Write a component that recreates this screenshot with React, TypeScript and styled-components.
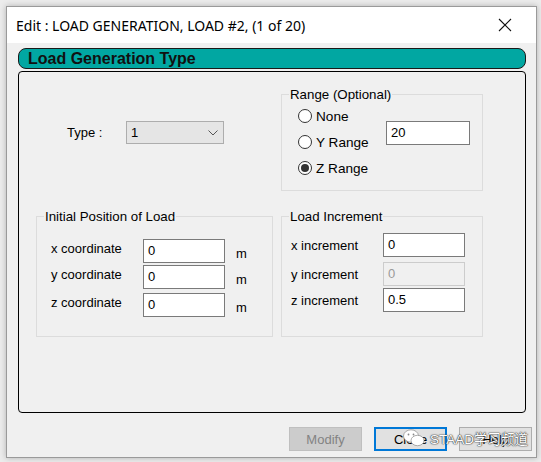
import React from 'react';
import styled, { createGlobalStyle } from 'styled-components';

const GlobalStyle = createGlobalStyle`
  html, body {
    margin: 0;
    padding: 0;
    background: #ececec;
  }
  * { box-sizing: border-box; }
`;

const Page = styled.div`
  width: 541px;
  height: 462px;
  padding: 6px 4px 4px 6px;
  position: relative;
`;

const Window = styled.div`
  width: 531px;
  height: 452px;
  border: 1px solid #9a9a9a;
  background: #f0f0f0;
  box-shadow: 0 0 6px rgba(0, 0, 0, 0.25);
  display: flex;
  flex-direction: column;
`;

const TitleBar = styled.div`
  height: 36px;
  background: #fff;
  display: flex;
  align-items: center;
  justify-content: space-between;
  padding: 0 12px 0 9px;
  font-family: 'Noto Sans', 'Open Sans', sans-serif;
  font-size: 14px;
  color: #000;
`;

const CloseX = styled.svg`
  width: 14px;
  height: 14px;
  margin-right: 12px;
`;

const Body = styled.div`
  flex: 1;
  padding: 5px 10px 0 11px;
  display: flex;
  flex-direction: column;
  font-family: 'Liberation Sans', Arial, sans-serif;
  font-size: 13px;
  color: #000;
`;

const Header = styled.div`
  height: 21px;
  width: 508px;
  background: #01a7a2;
  border: 1px solid #1a1a1a;
  border-radius: 8px;
  padding-left: 9px;
  font-size: 16px;
  font-weight: bold;
  line-height: 19px;
  color: #111;
`;

const Frame = styled.div`
  margin-top: 2px;
  width: 508px;
  height: 342px;
  border: 1px solid #000;
  border-radius: 4px;
  padding: 22px 42px 0 17px;
  display: grid;
  grid-template-columns: 237px 202px;
  grid-template-rows: 97px 121px;
  column-gap: 8px;
  row-gap: 25px;
`;

const TypeRow = styled.div`
  display: flex;
  align-items: center;
  padding: 27px 0 0 31px;
  height: 50px;
`;

const TypeLabel = styled.span`
  width: 59px;
`;

const Select = styled.div`
  width: 98px;
  height: 23px;
  background: #e5e5e5;
  border: 1px solid #adadad;
  display: flex;
  align-items: center;
  justify-content: space-between;
  padding: 0 5px 0 4px;
`;

const Group = styled.div`
  border: 1px solid #dcdcdc;
  display: flex;
  flex-direction: column;
`;

const Legend = styled.div<{ $left: number }>`
  margin: -8px 0 0 ${(p) => p.$left}px;
  align-self: flex-start;
  background: #f0f0f0;
  padding: 0 1px;
  line-height: 15px;
  font-size: 13.3px;
`;

const RangeBody = styled.div`
  display: grid;
  grid-template-columns: 88px 84px;
  padding: 1px 0 0 16px;
  font-size: 13.6px;
`;

const RadioList = styled.div`
  display: flex;
  flex-direction: column;
`;

const RadioRow = styled.label`
  height: 26px;
  display: flex;
  align-items: center;
  gap: 4px;
`;

const RadioCircle = styled.span<{ $checked?: boolean }>`
  width: 14px;
  height: 14px;
  border-radius: 50%;
  border: 1px solid #333;
  background: #fff;
  display: flex;
  align-items: center;
  justify-content: center;
  &::after {
    content: '';
    width: 8px;
    height: 8px;
    border-radius: 50%;
    background: #333;
    display: ${(p) => (p.$checked ? 'block' : 'none')};
  }
`;

const TextBox = styled.div<{ $w?: number; $disabled?: boolean }>`
  width: ${(p) => p.$w ?? 82}px;
  height: 24px;
  border: 1px solid ${(p) => (p.$disabled ? '#cccccc' : '#7a7a7a')};
  background: ${(p) => (p.$disabled ? '#f0f0f0' : '#fff')};
  color: ${(p) => (p.$disabled ? '#9a9a9a' : '#000')};
  padding: 2px 0 0 4px;
  line-height: 17px;
  font-size: 13px;
`;

const RangeInput = styled(TextBox)`
  margin-top: 18px;
`;

const Rows = styled.div<{ $pt: number }>`
  display: flex;
  flex-direction: column;
  padding-top: ${(p) => p.$pt}px;
`;

const FieldRow = styled.div<{ $pl: number; $mt?: number }>`
  display: flex;
  align-items: center;
  padding-left: ${(p) => p.$pl}px;
  margin-top: ${(p) => p.$mt ?? 0}px;
`;

const FieldLabel = styled.span<{ $lift?: number }>`
  width: 92px;
  position: relative;
  top: ${(p) => -(p.$lift ?? 0)}px;
`;

const Unit = styled.span`
  margin-left: 11px;
  position: relative;
  top: 2px;
`;

const ButtonBar = styled.div`
  display: flex;
  justify-content: flex-end;
  gap: 12px;
  margin-top: 14px;
  margin-right: -6px;
`;

const Button = styled.div<{ $variant?: 'disabled' | 'default' }>`
  width: 73px;
  height: 24px;
  display: flex;
  align-items: center;
  justify-content: center;
  font-family: 'Liberation Sans', Arial, sans-serif;
  font-size: 13px;
  background: ${(p) => (p.$variant === 'disabled' ? '#cccccc' : '#e1e1e1')};
  color: ${(p) => (p.$variant === 'disabled' ? '#838383' : '#000')};
  border: ${(p) =>
    p.$variant === 'default' ? '2px solid #0078d7' : p.$variant === 'disabled' ? '1px solid #bfbfbf' : '1px solid #adadad'};
`;

const Watermark = styled.div`
  position: absolute;
  left: 403px;
  top: 428px;
  display: flex;
  align-items: center;
  gap: 5px;
  font-family: 'Liberation Sans', 'Noto Sans CJK SC', sans-serif;
  font-size: 13.5px;
  color: #fff;
  text-shadow: 0 0 1px #333, 0 0 1px #333, 0 0 2px #666;
`;

const App = () => {
  return (
    <Page>
      <GlobalStyle />
      <Window>
        <TitleBar>
          <span>Edit : LOAD GENERATION, LOAD #2, (1 of 20)</span>
          <CloseX viewBox="0 0 14 14">
            <path d="M1 1 L13 13 M13 1 L1 13" stroke="#111" strokeWidth="1.1" />
          </CloseX>
        </TitleBar>
        <Body>
          <Header>Load Generation Type</Header>
          <Frame>
            <TypeRow>
              <TypeLabel>Type :</TypeLabel>
              <Select>
                <span>1</span>
                <svg width="10" height="6" viewBox="0 0 10 6">
                  <path d="M0.5 0.5 L5 5 L9.5 0.5" fill="none" stroke="#555" strokeWidth="1" />
                </svg>
              </Select>
            </TypeRow>
            <Group>
              <Legend $left={7}>Range (Optional)</Legend>
              <RangeBody>
                <RadioList>
                  <RadioRow><RadioCircle />None</RadioRow>
                  <RadioRow><RadioCircle />Y Range</RadioRow>
                  <RadioRow><RadioCircle $checked />Z Range</RadioRow>
                </RadioList>
                <RangeInput $w={84}>20</RangeInput>
              </RangeBody>
            </Group>
            <Group>
              <Legend $left={7}>Initial Position of Load</Legend>
              <Rows $pt={15}>
                <FieldRow $pl={14}>
                  <FieldLabel $lift={3}>x coordinate</FieldLabel>
                  <TextBox>0</TextBox>
                  <Unit>m</Unit>
                </FieldRow>
                <FieldRow $pl={14} $mt={2}>
                  <FieldLabel $lift={3}>y coordinate</FieldLabel>
                  <TextBox>0</TextBox>
                  <Unit>m</Unit>
                </FieldRow>
                <FieldRow $pl={14} $mt={4}>
                  <FieldLabel $lift={3}>z coordinate</FieldLabel>
                  <TextBox>0</TextBox>
                  <Unit>m</Unit>
                </FieldRow>
              </Rows>
            </Group>
            <Group>
              <Legend $left={7}>Load Increment</Legend>
              <Rows $pt={9}>
                <FieldRow $pl={9}>
                  <FieldLabel>x increment</FieldLabel>
                  <TextBox>0</TextBox>
                </FieldRow>
                <FieldRow $pl={9} $mt={5}>
                  <FieldLabel>y increment</FieldLabel>
                  <TextBox $disabled>0</TextBox>
                </FieldRow>
                <FieldRow $pl={9} $mt={2}>
                  <FieldLabel>z increment</FieldLabel>
                  <TextBox>0.5</TextBox>
                </FieldRow>
              </Rows>
            </Group>
          </Frame>
          <ButtonBar>
            <Button $variant="disabled">Modify</Button>
            <Button $variant="default">Close</Button>
            <Button>Help</Button>
          </ButtonBar>
        </Body>
      </Window>
      <Watermark>
        <svg width="22" height="18" viewBox="0 0 22 18">
          <ellipse cx="8" cy="7" rx="7.5" ry="6.2" fill="#fff" stroke="#888" strokeWidth="0.7" />
          <ellipse cx="14.5" cy="11.5" rx="6.5" ry="5.2" fill="#fff" stroke="#888" strokeWidth="0.7" />
          <circle cx="5.5" cy="5.5" r="0.9" fill="#888" />
          <circle cx="10.5" cy="5.5" r="0.9" fill="#888" />
        </svg>
        <span>STAAD学习频道</span>
      </Watermark>
    </Page>
  );
};

export default App;
